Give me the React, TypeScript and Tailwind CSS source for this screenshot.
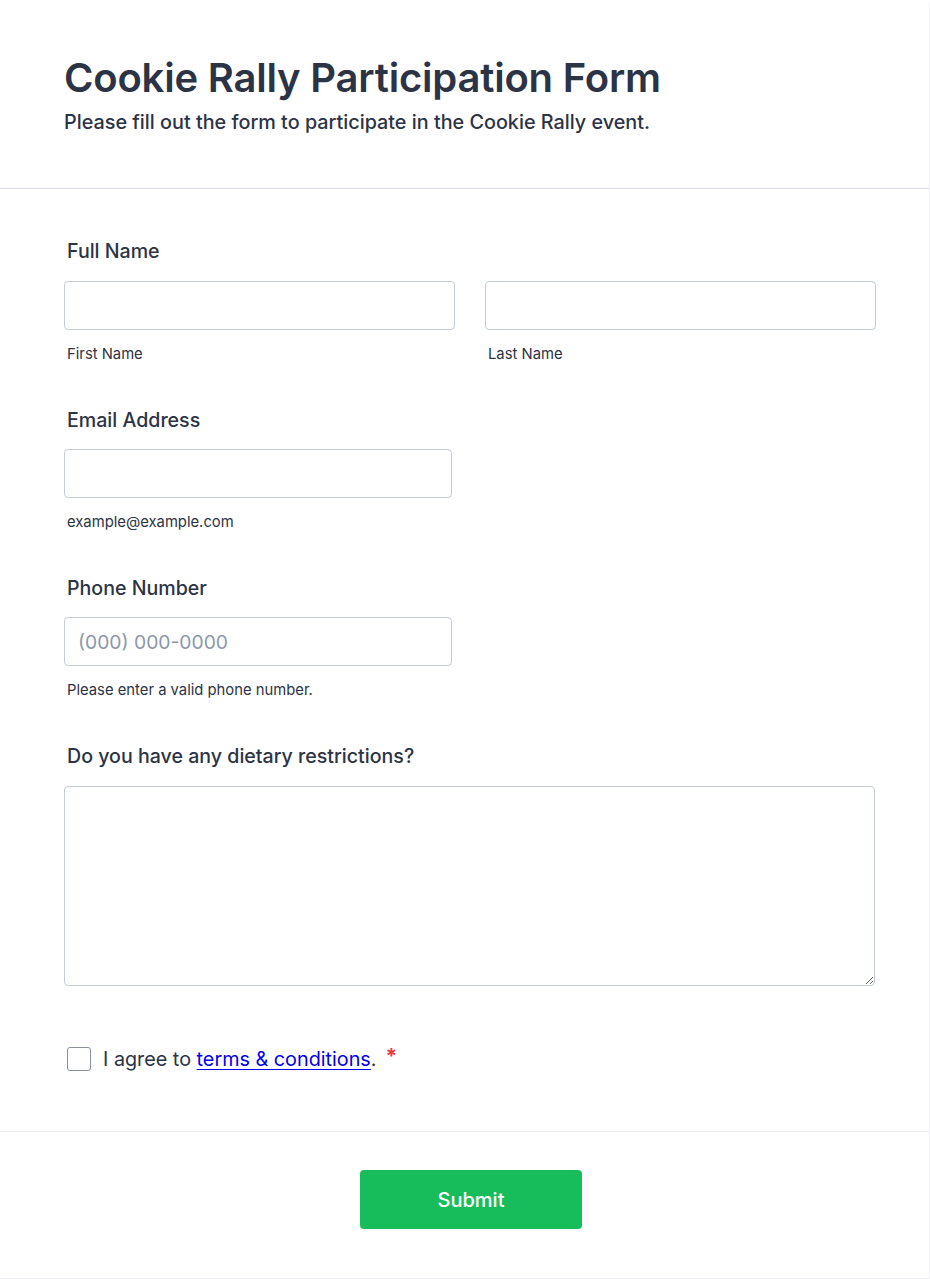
import React from "react";

const Label: React.FC<{ children: React.ReactNode }> = ({ children }) => (
  <div className="pl-[3px] text-[19.6px] font-medium leading-[24px] text-[#2c3345]">{children}</div>
);

const Sub: React.FC<{ children: React.ReactNode }> = ({ children }) => (
  <div className="mt-[15px] pl-[3px] text-[14.8px] leading-[18px] text-[#2c3345]">{children}</div>
);

const App: React.FC = () => {
  return (
    <div
      className="min-h-[1279px] w-[930px] bg-white"
      style={{ fontFamily: "Inter, 'Noto Sans', sans-serif" }}
    >
      <div className="h-[1279px] w-[930px] rounded-tr-[6px] border-r border-b border-[#f1f1f5] bg-white">
        {/* header */}
        <div className="h-[189px] border-b border-[#dcdce8] pl-[64px] pr-[55px] pt-[55px]">
          <h1 className="text-[40px] font-semibold leading-[46px] tracking-[-0.2px] text-[#2c3345]">
            Cookie Rally Participation Form
          </h1>
          <p className="mt-[9px] text-[19.8px] font-medium leading-[24px] text-[#2c3345]">
            Please fill out the form to participate in the Cookie Rally event.
          </p>
        </div>

        {/* fields */}
        <div className="pl-[64px] pr-[53px] pt-[50px]">
          <Label>Full Name</Label>
          <div className="mt-[18px] flex gap-[30px]">
            <div className="w-[391px]">
              <input className="h-[49px] w-full rounded-[4px] border border-[#c3cad8] px-[14px] outline-none" />
              <Sub>First Name</Sub>
            </div>
            <div className="w-[391px]">
              <input className="h-[49px] w-full rounded-[4px] border border-[#c3cad8] px-[14px] outline-none" />
              <Sub>Last Name</Sub>
            </div>
          </div>

          <div className="mt-[45px]">
            <Label>Email Address</Label>
            <input className="mt-[17px] h-[49px] w-[388px] rounded-[4px] border border-[#c3cad8] px-[14px] outline-none" />
            <Sub>example@example.com</Sub>
          </div>

          <div className="mt-[45px]">
            <Label>Phone Number</Label>
            <input
              placeholder="(000) 000-0000"
              className="mt-[17px] h-[49px] w-[388px] rounded-[4px] border border-[#c3cad8] px-[13px] text-[19.3px] outline-none placeholder:text-[#8c97ab]"
            />
            <Sub>Please enter a valid phone number.</Sub>
          </div>

          <div className="mt-[45px]">
            <Label>Do you have any dietary restrictions?</Label>
            <textarea className="mt-[18px] block h-[200px] w-[811px] rounded-[4px] border border-[#c3cad8] px-[14px] outline-none" />
          </div>

          <div className="mt-[61px] flex h-[24px] items-center pl-[3px]">
            <span className="h-[24px] w-[24px] rounded-[3px] border border-[#8a8f9c]" />
            <span className="ml-[12px] text-[19.8px] leading-[24px] text-[#2c3345]">
              I agree to{" "}
              <a href="#" className="text-[#0000ee] underline underline-offset-[3px]">
                terms &amp; conditions
              </a>
              .
            </span>
            <span className="ml-[9px] -mt-[5px] text-[21px] font-bold leading-[24px] text-[#f23a3c]">*</span>
          </div>
        </div>

        {/* footer */}
        <div className="mt-[60px] flex justify-center border-t border-[#ececf3] pl-[13px] pt-[38px]">
          <button className="h-[59px] w-[222px] rounded-[4px] bg-[#18bd5b] text-[20px] font-medium text-white">
            Submit
          </button>
        </div>
      </div>
    </div>
  );
};

export default App;
